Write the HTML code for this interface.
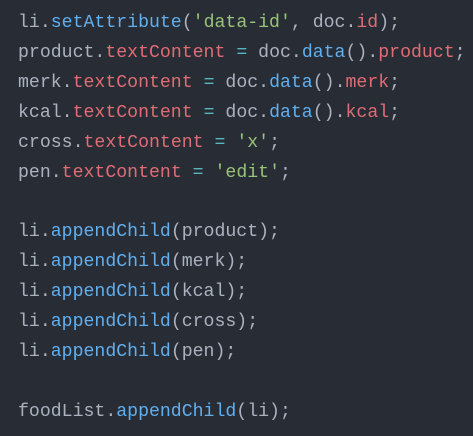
<!DOCTYPE html>
<html><head><style>
html,body{margin:0;padding:0;background:#282c34;width:473px;height:436px;overflow:hidden}
pre{margin:0;position:absolute;left:18px;top:9px;font-family:"Liberation Mono",monospace;font-size:18.2px;line-height:29.9px;color:#abb2bf}
.r{color:#e06c75}.b{color:#61afef}.g{color:#98c379}.c{color:#56b6c2}
</style></head><body>
<pre>li.<span class="b">setAttribute</span>(<span class="g">'data-id'</span>, doc.<span class="r">id</span>);
product.<span class="r">textContent</span> <span class="c">=</span> doc.<span class="b">data</span>().<span class="r">product</span>;
merk.<span class="r">textContent</span> <span class="c">=</span> doc.<span class="b">data</span>().<span class="r">merk</span>;
kcal.<span class="r">textContent</span> <span class="c">=</span> doc.<span class="b">data</span>().<span class="r">kcal</span>;
cross.<span class="r">textContent</span> <span class="c">=</span> <span class="g">'x'</span>;
pen.<span class="r">textContent</span> <span class="c">=</span> <span class="g">'edit'</span>;

li.<span class="b">appendChild</span>(product);
li.<span class="b">appendChild</span>(merk);
li.<span class="b">appendChild</span>(kcal);
li.<span class="b">appendChild</span>(cross);
li.<span class="b">appendChild</span>(pen);

foodList.<span class="b">appendChild</span>(li);</pre>
</body></html>
